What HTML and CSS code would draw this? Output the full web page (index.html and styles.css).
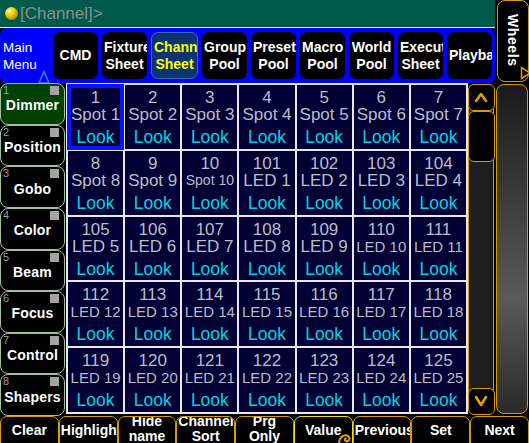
FILE: index.html
```html
<!DOCTYPE html>
<html>
<head>
<meta charset="utf-8">
<link rel="stylesheet" href="styles.css">
</head>
<body>
<div class="app">
  <div class="top">
    <div class="topmain">
      <div class="cmdline"><span class="ball"></span><span class="prompt">[Channel]&gt;</span></div>
      <div class="menubar">
        <div class="mainmenu">
          <div>Main</div><div>Menu</div>
          <svg class="mmtri" width="12" height="14" viewBox="0 0 12 14"><polygon points="6,1.5 11,13 1,13" fill="none" stroke="#4a78f0" stroke-width="1.5"/></svg>
        </div>
        <div class="mbtns">
          <div class="mbtn"><div>CMD</div></div>
          <div class="mbtn"><div>Fixture</div><div>Sheet</div></div>
          <div class="mbtn sel"><div>Channel</div><div>Sheet</div></div>
          <div class="mbtn"><div>Group</div><div>Pool</div></div>
          <div class="mbtn"><div>Preset</div><div>Pool</div></div>
          <div class="mbtn"><div>Macro</div><div>Pool</div></div>
          <div class="mbtn"><div>World</div><div>Pool</div></div>
          <div class="mbtn"><div>Executor</div><div>Sheet</div></div>
          <div class="mbtn"><div>Playbacks</div></div>
        </div>
      </div>
    </div>
    <div class="wheels">
      <span class="wtext">Wheels</span>
      <svg class="wtri" width="10" height="14" viewBox="0 0 10 14"><polygon points="1.5,1.5 1.5,12.5 10,7" fill="none" stroke="#d89c00" stroke-width="1.5"/></svg>
    </div>
  </div>

  <div class="middle">
    <div class="presets">
      <div class="pbtn on"><span class="pnum">1</span><span class="psq"></span><span class="plbl">Dimmer</span></div>
      <div class="pbtn"><span class="pnum">2</span><span class="psq"></span><span class="plbl">Position</span></div>
      <div class="pbtn"><span class="pnum">3</span><span class="psq"></span><span class="plbl">Gobo</span></div>
      <div class="pbtn"><span class="pnum">4</span><span class="psq"></span><span class="plbl">Color</span></div>
      <div class="pbtn"><span class="pnum">5</span><span class="psq"></span><span class="plbl">Beam</span></div>
      <div class="pbtn"><span class="pnum">6</span><span class="psq"></span><span class="plbl">Focus</span></div>
      <div class="pbtn"><span class="pnum">7</span><span class="psq"></span><span class="plbl">Control</span></div>
      <div class="pbtn"><span class="pnum">8</span><span class="psq"></span><span class="plbl">Shapers</span></div>
    </div>

    <div class="grid">
      <div class="cell sel"><div class="num">1</div><div class="nm">Spot 1</div><div class="look">Look</div></div>
      <div class="cell"><div class="num">2</div><div class="nm">Spot 2</div><div class="look">Look</div></div>
      <div class="cell"><div class="num">3</div><div class="nm">Spot 3</div><div class="look">Look</div></div>
      <div class="cell"><div class="num">4</div><div class="nm">Spot 4</div><div class="look">Look</div></div>
      <div class="cell"><div class="num">5</div><div class="nm">Spot 5</div><div class="look">Look</div></div>
      <div class="cell"><div class="num">6</div><div class="nm">Spot 6</div><div class="look">Look</div></div>
      <div class="cell"><div class="num">7</div><div class="nm">Spot 7</div><div class="look">Look</div></div>

      <div class="cell"><div class="num">8</div><div class="nm">Spot 8</div><div class="look">Look</div></div>
      <div class="cell"><div class="num">9</div><div class="nm">Spot 9</div><div class="look">Look</div></div>
      <div class="cell"><div class="num">10</div><div class="nm xs">Spot 10</div><div class="look">Look</div></div>
      <div class="cell"><div class="num">101</div><div class="nm">LED 1</div><div class="look">Look</div></div>
      <div class="cell"><div class="num">102</div><div class="nm">LED 2</div><div class="look">Look</div></div>
      <div class="cell"><div class="num">103</div><div class="nm">LED 3</div><div class="look">Look</div></div>
      <div class="cell"><div class="num">104</div><div class="nm">LED 4</div><div class="look">Look</div></div>

      <div class="cell"><div class="num">105</div><div class="nm">LED 5</div><div class="look">Look</div></div>
      <div class="cell"><div class="num">106</div><div class="nm">LED 6</div><div class="look">Look</div></div>
      <div class="cell"><div class="num">107</div><div class="nm">LED 7</div><div class="look">Look</div></div>
      <div class="cell"><div class="num">108</div><div class="nm">LED 8</div><div class="look">Look</div></div>
      <div class="cell"><div class="num">109</div><div class="nm">LED 9</div><div class="look">Look</div></div>
      <div class="cell"><div class="num">110</div><div class="nm sm">LED 10</div><div class="look">Look</div></div>
      <div class="cell"><div class="num">111</div><div class="nm sm">LED 11</div><div class="look">Look</div></div>

      <div class="cell"><div class="num">112</div><div class="nm sm">LED 12</div><div class="look">Look</div></div>
      <div class="cell"><div class="num">113</div><div class="nm sm">LED 13</div><div class="look">Look</div></div>
      <div class="cell"><div class="num">114</div><div class="nm sm">LED 14</div><div class="look">Look</div></div>
      <div class="cell"><div class="num">115</div><div class="nm sm">LED 15</div><div class="look">Look</div></div>
      <div class="cell"><div class="num">116</div><div class="nm sm">LED 16</div><div class="look">Look</div></div>
      <div class="cell"><div class="num">117</div><div class="nm sm">LED 17</div><div class="look">Look</div></div>
      <div class="cell"><div class="num">118</div><div class="nm sm">LED 18</div><div class="look">Look</div></div>

      <div class="cell"><div class="num">119</div><div class="nm sm">LED 19</div><div class="look">Look</div></div>
      <div class="cell"><div class="num">120</div><div class="nm sm">LED 20</div><div class="look">Look</div></div>
      <div class="cell"><div class="num">121</div><div class="nm sm">LED 21</div><div class="look">Look</div></div>
      <div class="cell"><div class="num">122</div><div class="nm sm">LED 22</div><div class="look">Look</div></div>
      <div class="cell"><div class="num">123</div><div class="nm sm">LED 23</div><div class="look">Look</div></div>
      <div class="cell"><div class="num">124</div><div class="nm sm">LED 24</div><div class="look">Look</div></div>
      <div class="cell"><div class="num">125</div><div class="nm sm">LED 25</div><div class="look">Look</div></div>
    </div>

    <div class="scroll">
      <div class="sbtn up"><svg width="16" height="12" viewBox="0 0 16 12"><polyline points="3,10 8,3 13,10" fill="none" stroke="#e0a000" stroke-width="2.6" stroke-linecap="round" stroke-linejoin="round"/></svg></div>
      <div class="thumb"></div>
      <div class="track"></div>
      <div class="sbtn down"><svg width="16" height="14" viewBox="0 0 16 14"><polyline points="3,3 8,11 13,3" fill="none" stroke="#e0a000" stroke-width="2.6" stroke-linecap="round" stroke-linejoin="round"/></svg></div>
    </div>

    <div class="side"></div>
  </div>

  <div class="bottom">
    <div class="bbtn"><div class="l1">Clear</div></div>
    <div class="bbtn"><div class="l1">Highlight</div></div>
    <div class="bbtn"><div class="l2"><div>Hide</div><div>name</div></div></div>
    <div class="bbtn"><div class="l2"><div>Channel</div><div>Sort</div></div></div>
    <div class="bbtn"><div class="l2"><div>Prg</div><div>Only</div></div></div>
    <div class="bbtn val"><div class="l1">Value</div>
      <svg class="curl" width="16" height="16" viewBox="0 0 16 16"><path d="M3 15 C3 8 8 5 12 7 C15 9 13 13 10 12 C8 11 9 9 10.5 9.5" fill="none" stroke="#e0a000" stroke-width="2"/></svg>
    </div>
    <div class="bbtn"><div class="l1">Previous</div></div>
    <div class="bbtn"><div class="l1">Set</div></div>
    <div class="bbtn"><div class="l1">Next</div></div>
  </div>
</div>
</body>
</html>
```

FILE: styles.css
```css
* { box-sizing: border-box; }

html, body {
  margin: 0;
  padding: 0;
  background: #000;
}

body {
  width: 529px;
  height: 443px;
  overflow: hidden;
  font-family: "Liberation Sans", Arial, sans-serif;
  color: #fff;
}

.app {
  display: flex;
  flex-direction: column;
  width: 529px;
  height: 443px;
}

/* ---------- top ---------- */
.top {
  display: flex;
  height: 83px;
  gap: 2px;
}

.topmain {
  width: 495px;
  flex: none;
  display: flex;
  flex-direction: column;
}

.cmdline {
  height: 28px;
  background: #005a4b;
  border-bottom: 1px solid #e6e6e6;
  display: flex;
  align-items: center;
  padding-left: 5px;
  gap: 2px;
}

.ball {
  width: 13px;
  height: 13px;
  border-radius: 50%;
  background: radial-gradient(circle at 35% 30%, #fff6a0 0%, #f2d000 35%, #b08a00 75%, #6a5200 100%);
}

.prompt {
  font-size: 17px;
  color: #8a8f8c;
  line-height: 20px;
}

.menubar {
  flex: 1;
  background: #0000ff;
  border-radius: 7px;
  display: flex;
  padding: 4px 3px 4px 0;
}

.mainmenu {
  width: 53px;
  flex: none;
  padding-left: 3px;
  font-size: 13.5px;
  line-height: 17px;
  display: flex;
  flex-direction: column;
  justify-content: center;
  position: relative;
}

.mmtri {
  position: absolute;
  left: 38px;
  bottom: -5px;
}

.mbtns {
  flex: 1;
  min-width: 0;
  display: flex;
  gap: 4px;
}

.mbtn {
  flex: 1 1 0;
  min-width: 0;
  background: #000;
  border-radius: 7px;
  overflow: hidden;
  display: flex;
  flex-direction: column;
  justify-content: center;
  text-align: center;
  font-weight: bold;
  font-size: 14px;
  line-height: 17px;
  white-space: nowrap;
  padding: 0 2px;
}

.mbtn.sel {
  background: #0c3470;
  border: 1px solid #3b68b8;
  color: #ffff00;
}

.wheels {
  width: 32px;
  flex: none;
  height: 82px;
  background: #000;
  border: 1.5px solid #d89c00;
  border-radius: 8px;
  position: relative;
  display: flex;
  justify-content: center;
  padding-top: 13px;
}

.wtext {
  writing-mode: vertical-rl;
  font-weight: bold;
  font-size: 14px;
  letter-spacing: 0.6px;
  line-height: 16px;
}

.wtri {
  position: absolute;
  right: -2px;
  bottom: 1px;
}

/* ---------- middle ---------- */
.middle {
  display: flex;
  height: 333px;
}

.presets {
  width: 65px;
  flex: none;
  display: flex;
  flex-direction: column;
}

.pbtn {
  flex: 1;
  position: relative;
  background: #000;
  border: 1.5px solid #a6bea0;
  border-radius: 8px;
  display: flex;
  align-items: center;
  justify-content: center;
  padding-top: 3px;
}

.pbtn.on {
  background: #004000;
}

.pnum {
  position: absolute;
  left: 2px;
  top: 0;
  font-size: 11px;
  line-height: 12px;
  color: #9a9a9a;
}

.psq {
  position: absolute;
  right: 5px;
  top: 2px;
  width: 9px;
  height: 9px;
  background: #a4a4a4;
}

.plbl {
  font-weight: bold;
  font-size: 14px;
  letter-spacing: 0.2px;
  white-space: nowrap;
}

.grid {
  margin-left: 1px;
  width: 402px;
  flex: none;
  height: 331px;
  background: #e8e8f0;
  padding: 2px;
  display: grid;
  grid-template-columns: repeat(7, 1fr);
  grid-template-rows: repeat(5, 1fr);
  gap: 2px;
}

.cell {
  background: #000034;
  text-align: center;
  padding-top: 4px;
  color: #bcbcc8;
  overflow: hidden;
  white-space: nowrap;
}

.cell.sel {
  border: 3px solid #0a14ff;
  box-shadow: 0 0 0 1px #0a14ff;
  padding-top: 1px;
}

.num, .nm {
  font-size: 17px;
  line-height: 17px;
}

.nm.sm { font-size: 15px; }
.nm.xs { font-size: 14px; }

.look {
  margin-top: 6px;
  font-size: 17.5px;
  line-height: 17px;
  color: #00d4e0;
}

.scroll {
  margin: 1px 0 2px 0;
  width: 26px;
  flex: none;
  background: #1e1e1e;
  border: 1.5px solid #d89c00;
  border-radius: 7px;
  display: flex;
  flex-direction: column;
}

.sbtn {
  height: 27px;
  margin: -1.5px -1.5px 0;
  background: #000;
  border: 1.5px solid #d89c00;
  border-radius: 6px;
  display: flex;
  align-items: center;
  justify-content: center;
}

.sbtn.down {
  margin: 0 -1.5px -1.5px;
}

.thumb {
  height: 51px;
  margin: 0 -1.5px;
  background: #000;
  border: 1.5px solid #d89c00;
  border-radius: 6px;
}

.track {
  flex: 1;
}

.side {
  margin: 1px 0 2px 2px;
  width: 32px;
  flex: none;
  border: 1.5px solid #d89c00;
  border-radius: 8px;
  background: linear-gradient(to bottom, #1a1a1a 0%, #3c3c3c 35%, #5a5a5a 65%, #2a2a2a 100%);
}

/* ---------- bottom ---------- */
.bottom {
  height: 27px;
  display: grid;
  grid-template-columns: repeat(9, minmax(0, 1fr));
  overflow: hidden;
}

.bbtn {
  height: 34px;
  min-width: 0;
  position: relative;
  background: #000;
  border: 1.5px solid #d89c00;
  border-radius: 7px;
  overflow: hidden;
  text-align: center;
  font-weight: bold;
  font-size: 14px;
  white-space: nowrap;
  padding: 0 1px;
}

.bbtn.val {
  border-color: #f4dc00;
}

.l1 {
  line-height: 16px;
  padding-top: 5px;
}

.l2 {
  line-height: 15px;
  margin-top: -3px;
}

.curl {
  position: absolute;
  right: 0;
  top: 12px;
}
```
